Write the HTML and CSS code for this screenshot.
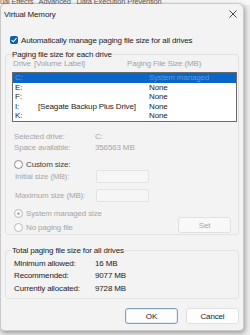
FILE: index.html
```html
<!DOCTYPE html>
<html lang="en">
<head>
    <meta charset="UTF-8">
    <title>Virtual Memory</title>
    <link rel="stylesheet" href="styles.css">
</head>
<body>
    <div class="tabs"><span>ual Effects &nbsp; Advanced &nbsp; Data Execution Prevention</span></div>

    <div class="dialog">
        <div class="titlebar">
            <span>Virtual Memory</span>
            <svg class="close" width="8" height="8" viewBox="0 0 8 8">
                <path d="M0.5 0.5 L7.5 7.5 M7.5 0.5 L0.5 7.5" stroke="#333" stroke-width="0.9"/>
            </svg>
        </div>

        <div class="content">
            <label class="check">
                <span class="box">
                    <svg width="8" height="8" viewBox="0 0 8 8">
                        <path d="M1.6 4.2 L3.3 5.8 L6.5 2.2" stroke="#fff" stroke-width="1.1" fill="none"/>
                    </svg>
                </span>
                Automatically manage paging file size for all drives
            </label>

            <fieldset class="group drives">
                <legend>Paging file size for each drive</legend>
                <div class="list-head">
                    <span class="c1">Drive</span><span class="c2">[Volume Label]</span><span>Paging File Size (MB)</span>
                </div>
                <div class="listbox">
                    <div class="row selected"><span class="c1">C:</span><span class="c2"></span><span>System managed</span></div>
                    <div class="row"><span class="c1">E:</span><span class="c2"></span><span>None</span></div>
                    <div class="row"><span class="c1">F:</span><span class="c2"></span><span>None</span></div>
                    <div class="row"><span class="c1">I:</span><span class="c2">[Seagate Backup Plus Drive]</span><span>None</span></div>
                    <div class="row"><span class="c1">K:</span><span class="c2"></span><span>None</span></div>
                </div>

                <div class="info muted">
                    <span>Selected drive:</span><span>C:</span>
                    <span>Space available:</span><span>356563 MB</span>
                </div>

                <div class="radio custom"><span class="dot"></span>Custom size:</div>
                <div class="sizes muted">
                    <span>Initial size (MB):</span><span class="field"></span>
                    <span>Maximum size (MB):</span><span class="field"></span>
                </div>

                <div class="bottom-opts">
                    <div class="opts muted">
                        <div class="radio"><span class="dot on"></span>System managed size</div>
                        <div class="radio"><span class="dot"></span>No paging file</div>
                    </div>
                    <button class="btn set">Set</button>
                </div>
            </fieldset>

            <fieldset class="group totals">
                <legend>Total paging file size for all drives</legend>
                <div class="info">
                    <span>Minimum allowed:</span><span>16 MB</span>
                    <span>Recommended:</span><span>9077 MB</span>
                    <span>Currently allocated:</span><span>9728 MB</span>
                </div>
            </fieldset>

            <div class="actions">
                <button class="btn ok">OK</button>
                <button class="btn">Cancel</button>
            </div>
        </div>
    </div>
</body>
</html>
```

FILE: styles.css
```css
/* Page */
html, body {
    margin: 0;
    padding: 0;
}

body {
    width: 250px;
    height: 335px;
    overflow: hidden;
    background: #ececec;
    font-family: 'Liberation Sans', Arial, sans-serif;
    font-size: 8px;
    letter-spacing: -0.15px;
    color: #1b1b1b;
    white-space: nowrap;
}

/* Property sheet peeking out behind the dialog */
.tabs {
    height: 5px;
    overflow: hidden;
    background: #f7f7f7;
}

.tabs span {
    display: block;
    margin-top: -3px;
    line-height: 9px;
    color: #555;
    font-size: 7.5px;
}

/* Dialog window */
.dialog {
    width: 244px;
    height: 328px;
    margin-top: -2px;
    background: #f3f3f3;
    border: 1px solid #c9c9c9;
    border-radius: 6px 6px 4px 4px;
    box-shadow: 1px 2px 5px rgba(0, 0, 0, 0.35);
    box-sizing: border-box;
}

.titlebar {
    height: 20px;
    display: flex;
    align-items: center;
    justify-content: space-between;
    padding: 0 6px 0 3px;
    color: #222;
}

.content {
    padding: 0 4px;
}

/* Checkbox */
.check {
    display: flex;
    align-items: center;
    gap: 3px;
    height: 10px;
    margin: 11px 0 0 5px;
}

.box {
    width: 8px;
    height: 8px;
    border-radius: 2px;
    background: #0a5fb4;
    display: flex;
    align-items: center;
    justify-content: center;
}

/* Group boxes */
.group {
    margin: 0;
    border: 1px solid #e2e2e2;
    border-radius: 3px;
    padding: 0 1px 0 6px;
    min-width: 0;
}

.group legend {
    padding: 0;
    line-height: 9px;
    color: #222;
}

.drives {
    margin-top: 5px;
    height: 185px;
    box-sizing: border-box;
}

.list-head {
    display: flex;
    height: 11px;
    align-items: center;
    margin-top: -1px;
    padding-left: 1px;
    color: #a3a3a3;
}

.list-head .c1 { width: 21px; }
.list-head .c2 { width: 93px; }

.listbox {
    margin-top: 3px;
    border: 1px solid #6b6b6b;
    background: #fff;
    height: 50px;
    box-sizing: border-box;
}

.row {
    display: flex;
    height: 9.5px;
    line-height: 9.5px;
    padding-left: 2px;
}

.row .c1 { width: 23px; }
.row .c2 { width: 111px; }

.row.selected {
    background: #0a66c8;
    color: #5d9ad9;
}

/* Label/value grids */
.info {
    display: grid;
    grid-template-columns: 81px auto;
    grid-auto-rows: 11px;
    align-items: center;
    padding-left: 2px;
}

.drives .info {
    margin-top: 9px;
}

.muted {
    color: #a6a6a6;
}

/* Radio buttons */
.radio {
    display: flex;
    align-items: center;
    gap: 3px;
    height: 11px;
}

.dot {
    width: 7px;
    height: 7px;
    border: 1px solid #b8b8b8;
    border-radius: 50%;
    background: #fbfbfb;
    display: flex;
    align-items: center;
    justify-content: center;
}

.dot.on::after {
    content: "";
    width: 3px;
    height: 3px;
    border-radius: 50%;
    background: #b5b5b5;
}

.custom {
    margin-top: 6px;
    padding-left: 2px;
    color: #444;
}

.custom .dot {
    border-color: #8a8a8a;
    background: #fff;
}

.sizes {
    display: grid;
    grid-template-columns: 81px 53px;
    grid-auto-rows: 19px;
    align-items: center;
    margin-top: -3px;
    padding-left: 3px;
}

.field {
    height: 13px;
    border: 1px solid #e3e3e3;
    border-radius: 2px;
    background: #f6f6f6;
    box-sizing: border-box;
}

.bottom-opts {
    display: flex;
    justify-content: space-between;
    align-items: flex-end;
    margin-top: 1px;
    padding: 0 6px 0 2px;
}

.opts .radio {
    height: 14px;
}

/* Buttons */
.btn {
    font-family: inherit;
    font-size: 8px;
    letter-spacing: -0.15px;
    height: 16px;
    width: 53px;
    padding: 0;
    border: 1px solid #e0e0e0;
    border-radius: 3px;
    background: #fdfdfd;
    color: #1b1b1b;
}

.btn.set {
    color: #a6a6a6;
    background: #f8f8f8;
    margin-bottom: 1px;
}

.btn.ok {
    border-color: #7c9fbf;
    box-shadow: inset 0 0 0 1px #e4eef7;
}

.totals {
    margin-top: 11px;
    height: 53px;
    box-sizing: border-box;
}

.totals .info {
    grid-auto-rows: 12.5px;
    margin-top: 2px;
}

.actions {
    display: flex;
    justify-content: flex-end;
    gap: 8px;
    margin-top: 9px;
}
```
